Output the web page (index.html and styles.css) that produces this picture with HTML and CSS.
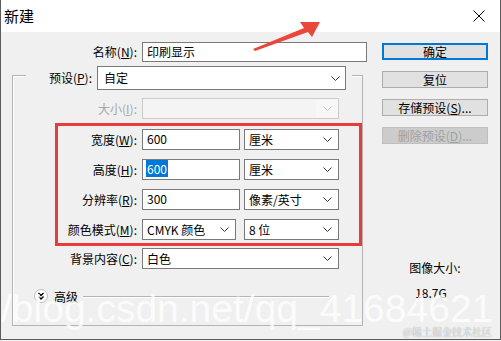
FILE: index.html
```html
<!DOCTYPE html>
<html lang="zh">
<head>
    <meta charset="UTF-8">
    <title>新建</title>
    <link rel="stylesheet" href="styles.css">
</head>
<body>
    <div class="window">
        <div class="titlebar">
            <span class="title">新建</span>
            <svg class="close" width="12" height="12" viewBox="0 0 12 12"><path d="M0.5 0.5 L11.5 11.5 M11.5 0.5 L0.5 11.5" stroke="#000" stroke-width="1"/></svg>
        </div>

        <div class="content">
            <div class="form">
                <div class="row name-row">
                    <span class="lbl lbl-wide">名称(<u>N</u>):</span>
                    <div class="field name-field">印刷显示</div>
                </div>

                <div class="group">
                    <div class="row preset-row">
                        <span class="lbl lbl-preset">预设(<u>P</u>):</span>
                        <div class="select preset-select">
                            <span>自定</span>
                            <svg width="9" height="5" viewBox="0 0 9 5"><path d="M0.5 0.5 L4.5 4.5 L8.5 0.5" fill="none" stroke="#333"/></svg>
                        </div>
                    </div>

                    <div class="row size-row">
                        <span class="lbl lbl-group disabled">大小(<u>I</u>):</span>
                        <div class="select wide-select is-disabled">
                            <span></span>
                            <span class="drop-btn"><svg width="9" height="5" viewBox="0 0 9 5"><path d="M0.5 0.5 L4.5 4.5 L8.5 0.5" fill="none" stroke="#c4c4c4"/></svg></span>
                        </div>
                    </div>

                    <div class="marked">
                        <div class="row">
                            <span class="lbl lbl-marked">宽度(<u>W</u>):</span>
                            <div class="field num-field">600</div>
                            <div class="select unit-select">
                                <span>厘米</span>
                                <svg width="9" height="5" viewBox="0 0 9 5"><path d="M0.5 0.5 L4.5 4.5 L8.5 0.5" fill="none" stroke="#333"/></svg>
                            </div>
                        </div>
                        <div class="row">
                            <span class="lbl lbl-marked">高度(<u>H</u>):</span>
                            <div class="field num-field"><span class="selected">600</span></div>
                            <div class="select unit-select">
                                <span>厘米</span>
                                <svg width="9" height="5" viewBox="0 0 9 5"><path d="M0.5 0.5 L4.5 4.5 L8.5 0.5" fill="none" stroke="#333"/></svg>
                            </div>
                        </div>
                        <div class="row">
                            <span class="lbl lbl-marked">分辨率(<u>R</u>):</span>
                            <div class="field num-field">300</div>
                            <div class="select unit-select">
                                <span>像素/英寸</span>
                                <svg width="9" height="5" viewBox="0 0 9 5"><path d="M0.5 0.5 L4.5 4.5 L8.5 0.5" fill="none" stroke="#333"/></svg>
                            </div>
                        </div>
                        <div class="row">
                            <span class="lbl lbl-marked">颜色模式(<u>M</u>):</span>
                            <div class="select mode-select">
                                <span>CMYK 颜色</span>
                                <svg width="9" height="5" viewBox="0 0 9 5"><path d="M0.5 0.5 L4.5 4.5 L8.5 0.5" fill="none" stroke="#333"/></svg>
                            </div>
                            <div class="select unit-select">
                                <span>8 位</span>
                                <svg width="9" height="5" viewBox="0 0 9 5"><path d="M0.5 0.5 L4.5 4.5 L8.5 0.5" fill="none" stroke="#333"/></svg>
                            </div>
                        </div>
                    </div>

                    <div class="row bg-row">
                        <span class="lbl lbl-group">背景内容(<u>C</u>):</span>
                        <div class="select wide-select">
                            <span>白色</span>
                            <svg width="9" height="5" viewBox="0 0 9 5"><path d="M0.5 0.5 L4.5 4.5 L8.5 0.5" fill="none" stroke="#333"/></svg>
                        </div>
                    </div>

                    <div class="advanced">
                        <svg class="adv-icon" width="14" height="14" viewBox="0 0 14 14">
                            <circle cx="7" cy="7" r="6.5" fill="#fff" stroke="#bdbdbd"/>
                            <path d="M4.5 4 L7 6.5 L9.5 4 M4.5 7.5 L7 10 L9.5 7.5" fill="none" stroke="#000" stroke-width="1.3"/>
                        </svg>
                        <span>高级</span>
                        <div class="adv-line"></div>
                    </div>
                </div>
            </div>

            <div class="side">
                <div class="btn btn-default">确定</div>
                <div class="btn">复位</div>
                <div class="btn">存储预设(<u>S</u>)...</div>
                <div class="btn btn-disabled">删除预设(<u>D</u>)...</div>
                <div class="info info-title">图像大小:</div>
                <div class="info info-size">18.7G</div>
            </div>
        </div>

        <svg class="arrow" width="75" height="40" viewBox="0 0 75 40">
            <polygon points="2,34 53,13 49,7 69,7 61,22 57,17 4,36" fill="#e9473b"/>
        </svg>
        <div class="watermark">/blog.csdn.net/qq_41684621</div>
        <div class="credit">@稀土掘金技术社区</div>
    </div>
</body>
</html>
```

FILE: styles.css
```css
* {
    box-sizing: border-box;
}

body {
    margin: 0;
    font-family: "Noto Sans CJK SC", "Microsoft YaHei", sans-serif;
    font-size: 12px;
    color: #000;
    background-color: #f0f0f0;
}

.window {
    position: relative;
    width: 501px;
    height: 340px;
    border: 1px solid #5c5c5c;
    border-top: none;
    background-color: #f0f0f0;
    overflow: hidden;
}

.titlebar {
    height: 32px;
    background-color: #fff;
    display: flex;
    align-items: center;
    justify-content: space-between;
    padding: 0 15px 0 3px;
}

.title {
    font-size: 15px;
    line-height: 16px;
}

.content {
    display: flex;
}

.form {
    width: 366px;
}

.row {
    display: flex;
    align-items: center;
}

.lbl {
    text-align: right;
    white-space: nowrap;
    margin-right: 5px;
    line-height: 16px;
}

.lbl u {
    text-underline-offset: 1px;
}

.lbl-wide {
    width: 136px;
}

.lbl-preset {
    width: 66px;
}

.lbl-group {
    width: 124px;
}

.lbl-marked {
    width: 79px;
}

.disabled {
    color: #a6a6a6;
}

.field,
.select {
    height: 21px;
    border: 1px solid #7a7a7a;
    background-color: #fff;
    line-height: 18px;
    white-space: nowrap;
}

.field {
    padding: 0 4px;
}

.select {
    display: flex;
    align-items: center;
    justify-content: space-between;
    padding: 0 6px 0 4px;
}

.name-row {
    margin-top: 10px;
}

.name-field {
    width: 225px;
    height: 20px;
}

.group {
    margin: 13px 0 0 11px;
    width: 351px;
    height: 251px;
    border: 1px solid #b4b4b4;
    box-shadow: inset 1px 1px 0 #fff;
}

.preset-row {
    margin: -10px 0 0 13px;
    width: 326px;
    padding-right: 6px;
    background-color: #f0f0f0;
}

.preset-select {
    width: 249px;
    height: 24px;
    padding-left: 6px;
    padding-right: 5px;
}

.size-row {
    margin-top: 8px;
}

.wide-select {
    width: 197px;
}

.is-disabled {
    border-color: #cccccc;
    background-color: #f4f4f4;
    padding-right: 0;
}

.drop-btn {
    width: 22px;
    height: 19px;
    display: flex;
    align-items: center;
    justify-content: center;
    background-color: #f7f7f7;
}

.marked {
    margin: 4px 0 0 42px;
    width: 307px;
    border: 3px solid #e83c3c;
    padding: 3px 0;
}

.marked .row + .row {
    margin-top: 9px;
}

.num-field {
    width: 98px;
    margin-right: 4px;
}

.selected {
    background-color: #0078d7;
    color: #fff;
    margin-left: -1px;
    padding: 0 1px;
}

.unit-select {
    width: 95px;
}

.mode-select {
    width: 94px;
    margin-right: 8px;
}

.bg-row {
    margin-top: 2px;
}

.advanced {
    display: flex;
    align-items: center;
    height: 16px;
    margin-top: 19px;
    padding-left: 21px;
}

.adv-icon {
    margin-right: 6px;
}

.adv-line {
    flex: 1;
    margin: 1px 33px 0 5px;
    border-top: 1px solid #b4b4b4;
    border-bottom: 1px solid #fff;
}

.side {
    margin-left: 15px;
    width: 106px;
}

.btn {
    height: 17px;
    margin-top: 11px;
    border: 1px solid #adadad;
    background-color: #e1e1e1;
    text-align: center;
    line-height: 15px;
    white-space: nowrap;
}

.btn-default {
    border: 2px solid #0078d7;
    line-height: 13px;
}

.btn-disabled {
    background-color: #cccccc;
    border-color: #bfbfbf;
    color: #a0a0a0;
}

.info {
    text-align: center;
    line-height: 14px;
}

.info-title {
    margin-top: 117px;
}

.info-size {
    margin-top: 11px;
    padding-right: 8px;
}

.arrow {
    position: absolute;
    left: 250px;
    top: 15px;
}

.watermark {
    position: absolute;
    left: 0;
    top: 289px;
    font-family: "Liberation Sans", Arial, sans-serif;
    font-size: 39px;
    line-height: 39px;
    color: rgba(255, 255, 255, 0.78);
    white-space: nowrap;
}

.credit {
    position: absolute;
    right: 8px;
    top: 326px;
    font-family: "Noto Serif CJK SC", "Noto Sans CJK SC", serif;
    font-size: 10px;
    line-height: 12px;
    color: rgba(255, 255, 255, 0.9);
    text-shadow: 0 0 1px rgba(0, 0, 0, 0.55);
    white-space: nowrap;
}
```
